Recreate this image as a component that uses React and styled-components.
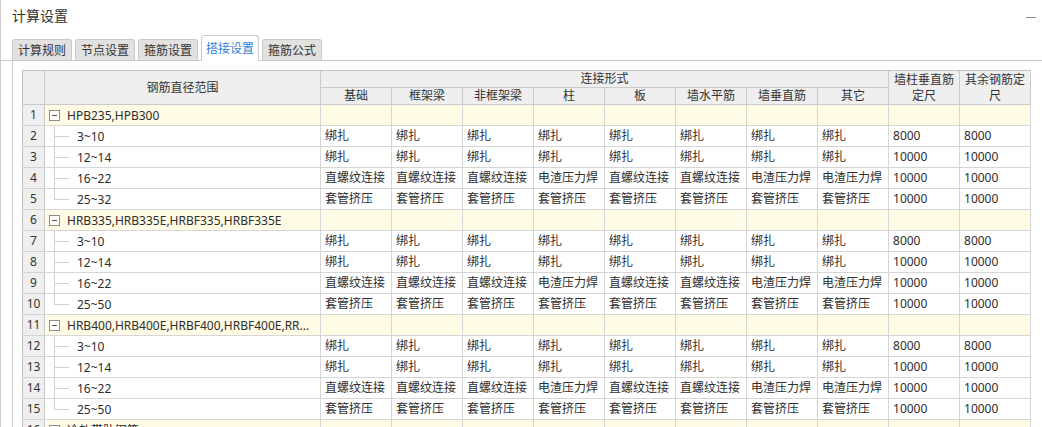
import React from "react";
import styled, { createGlobalStyle } from "styled-components";

const Global = createGlobalStyle`
  html, body { margin: 0; padding: 0; background: #fff; }
  body { font-family: "Noto Sans", "Noto Sans CJK SC", sans-serif; color: #333; }
  * { box-sizing: border-box; }
`;

const Page = styled.div`
  width: 1042px;
  height: 427px;
  overflow: hidden;
  border-left: 1px solid #cfcfcf;
  display: flex;
  flex-direction: column;
`;

const TitleBar = styled.div`
  height: 32px;
  flex: none;
  display: flex;
  align-items: center;
  justify-content: space-between;
  padding: 0 6px 0 11px;
`;

const Title = styled.span`
  font-size: 14px;
  color: #333;
  line-height: 20px;
`;

const MinBtn = styled.span`
  width: 10px;
  height: 1px;
  background: #8a8a8a;
  margin-top: 2px;
`;

const TabStrip = styled.div`
  height: 29px;
  flex: none;
  display: flex;
  align-items: flex-end;
  gap: 3px;
  padding-left: 11px;
  border-bottom: 1px solid #c8c8c8;
`;

const Tab = styled.div`
  height: ${(p) => (p.$active ? "26px" : "21px")};
  margin-bottom: ${(p) => (p.$active ? "-1px" : "0")};
  padding: 0 ${(p) => (p.$active ? "4px" : "5px")};
  display: flex;
  align-items: center;
  font-size: 12px;
  color: ${(p) => (p.$active ? "#2f7fd6" : "#333")};
  background: ${(p) => (p.$active ? "#fff" : "#e1e1e1")};
  border: 1px solid #c9c9c9;
  border-bottom: ${(p) => (p.$active ? "1px solid #fff" : "none")};
  border-radius: 3px 3px 0 0;
  white-space: nowrap;
`;

const Panel = styled.div`
  flex: 1;
  margin-left: 11px;
  border-left: 1px solid #c9c9c9;
  padding: 9px 0 0 9px;
  overflow: hidden;
`;

const Grid = styled.table`
  table-layout: fixed;
  border-collapse: separate;
  border-spacing: 0;
  width: 1009px;
  border-top: 1px solid #c4c4c4;
  border-left: 1px solid #c4c4c4;
  font-size: 12px;
`;

const HeadCell = styled.th`
  background: #efefef;
  font-weight: normal;
  color: #333;
  text-align: center;
  vertical-align: middle;
  line-height: 16px;
  height: ${(p) => p.$h || 17}px;
  padding: 0 4px;
  border-right: 1px solid #cacaca;
  border-bottom: 1px solid #cacaca;
  overflow: hidden;
`;

const NumCell = styled.td`
  background: #efefef;
  text-align: center;
  height: 21px;
  padding: 0;
  line-height: 20px;
  border-right: 1px solid #cacaca;
  border-bottom: 1px solid #d2d2d2;
  color: #333;
`;

const Cell = styled.td`
  background: ${(p) => (p.$group ? "#fffbe5" : "#fff")};
  height: 21px;
  padding: 0 0 0 4px;
  line-height: 20px;
  border-right: 1px solid #d6d6d6;
  border-bottom: 1px solid #d6d6d6;
  white-space: nowrap;
  overflow: hidden;
  color: #2e2e2e;
`;

const NameCell = styled.td`
  background: ${(p) => (p.$group ? "#fffbe5" : "#fff")};
  height: 21px;
  padding: 0;
  border-right: 1px solid #d6d6d6;
  border-bottom: 1px solid #d6d6d6;
  color: #2e2e2e;
`;

const NameInner = styled.div`
  display: flex;
  align-items: center;
  height: 20px;
  padding-left: ${(p) => (p.$group ? "4px" : "9px")};
  gap: ${(p) => (p.$group ? "7px" : "8px")};
  white-space: nowrap;
  overflow: hidden;
`;

const Toggle = styled.span`
  width: 11px;
  height: 11px;
  border: 1px solid #8e8e8e;
  background: #fff;
  display: flex;
  align-items: center;
  justify-content: center;
  flex: none;
  &::before {
    content: "";
    width: 5px;
    height: 1px;
    background: #555;
  }
`;

const Guide = styled.span`
  align-self: stretch;
  width: 15px;
  flex: none;
  margin-top: -1px;
  background:
    linear-gradient(#d0d0d0, #d0d0d0) left top / 1px ${(p) => (p.$last ? "55%" : "100%")} no-repeat,
    linear-gradient(#d0d0d0, #d0d0d0) left 11px / 100% 1px no-repeat;
`;

const tie = Array(8).fill("绑扎");
const weld = ["直螺纹连接", "直螺纹连接", "直螺纹连接", "电渣压力焊", "直螺纹连接", "直螺纹连接", "电渣压力焊", "电渣压力焊"];
const sleeve = Array(8).fill("套管挤压");

const makeChildren = (last) => [
  { name: "3~10", vals: [...tie, "8000", "8000"] },
  { name: "12~14", vals: [...tie, "10000", "10000"] },
  { name: "16~22", vals: [...weld, "10000", "10000"] },
  { name: last, vals: [...sleeve, "10000", "10000"] },
];

const groups = [
  { name: "HPB235,HPB300", children: makeChildren("25~32") },
  { name: "HRB335,HRB335E,HRBF335,HRBF335E", children: makeChildren("25~50") },
  { name: "HRB400,HRB400E,HRBF400,HRBF400E,RR...", children: makeChildren("25~50") },
  { name: "冷轧带肋钢筋", children: [] },
];

const subHeads = ["基础", "框架梁", "非框架梁", "柱", "板", "墙水平筋", "墙垂直筋", "其它"];

export default function App() {
  const rows = [];
  let n = 0;
  groups.forEach((g, gi) => {
    n += 1;
    rows.push(
      <tr key={`g${gi}`}>
        <NumCell>{n}</NumCell>
        <NameCell $group>
          <NameInner $group>
            <Toggle />
            <span>{g.name}</span>
          </NameInner>
        </NameCell>
        {Array.from({ length: 10 }).map((_, i) => (
          <Cell key={i} $group />
        ))}
      </tr>
    );
    g.children.forEach((c, ci) => {
      n += 1;
      rows.push(
        <tr key={`c${gi}-${ci}`}>
          <NumCell>{n}</NumCell>
          <NameCell>
            <NameInner>
              <Guide $last={ci === g.children.length - 1} />
              <span>{c.name}</span>
            </NameInner>
          </NameCell>
          {c.vals.map((v, i) => (
            <Cell key={i}>{v}</Cell>
          ))}
        </tr>
      );
    });
  });

  return (
    <>
      <Global />
      <Page>
        <TitleBar>
          <Title>计算设置</Title>
          <MinBtn />
        </TitleBar>
        <TabStrip>
          <Tab>计算规则</Tab>
          <Tab>节点设置</Tab>
          <Tab>箍筋设置</Tab>
          <Tab $active>搭接设置</Tab>
          <Tab>箍筋公式</Tab>
        </TabStrip>
        <Panel>
          <Grid>
            <colgroup>
              <col style={{ width: 22 }} />
              <col style={{ width: 276 }} />
              {Array.from({ length: 10 }).map((_, i) => (
                <col key={i} style={{ width: 71 }} />
              ))}
            </colgroup>
            <thead>
              <tr>
                <HeadCell rowSpan={2} />
                <HeadCell rowSpan={2}>钢筋直径范围</HeadCell>
                <HeadCell colSpan={8}>连接形式</HeadCell>
                <HeadCell rowSpan={2}>墙柱垂直筋定尺</HeadCell>
                <HeadCell rowSpan={2}>其余钢筋定尺</HeadCell>
              </tr>
              <tr>
                {subHeads.map((h) => (
                  <HeadCell key={h}>{h}</HeadCell>
                ))}
              </tr>
            </thead>
            <tbody>{rows}</tbody>
          </Grid>
        </Panel>
      </Page>
    </>
  );
}
